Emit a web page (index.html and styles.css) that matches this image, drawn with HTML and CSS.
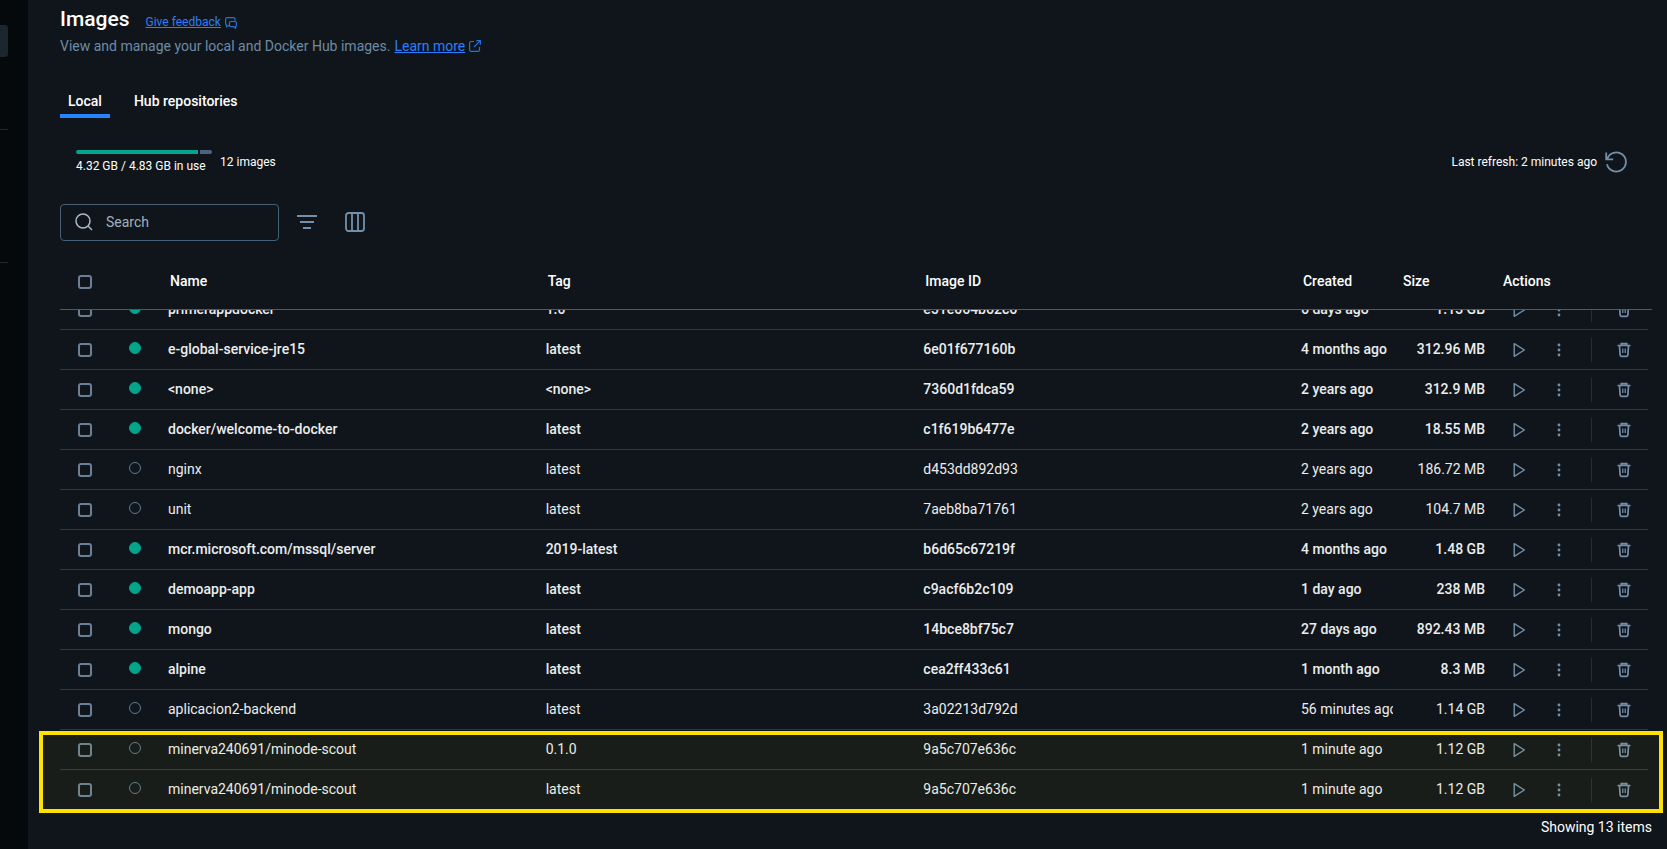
FILE: index.html
```html
<!DOCTYPE html>
<html lang="en">
<head>
<meta charset="utf-8">
<title>Images</title>
<link rel="stylesheet" href="styles.css">
</head>
<body>
<svg class="sprite" aria-hidden="true">
  <symbol id="i-play" viewBox="0 0 16 16"><path d="M3.2 1.7v12.6L13.4 8z" fill="none" stroke="currentColor" stroke-width="1.4" stroke-linejoin="round"/></symbol>
  <symbol id="i-more" viewBox="0 0 16 16"><g fill="currentColor"><circle cx="8" cy="3" r="1.4"/><circle cx="8" cy="8" r="1.4"/><circle cx="8" cy="13" r="1.4"/></g></symbol>
  <symbol id="i-trash" viewBox="0 0 16 16"><path d="M1.5 3.5h13M5.3 3V1.7h5.4V3M3.500 3.8l.6 9.200c.1 1 .5 1.300 1.300 1.300h5.200c.8 0 1.200-.3 1.300-1.300l.6-9.200" fill="none" stroke="currentColor" stroke-width="1.7"/><path d="M6.800 6.500v4.500M9.200 6.500v4.500" stroke="currentColor" stroke-width="1.200"/></symbol>
</svg>
<div class="app">
  <nav class="rail" aria-label="Sections">
    <span class="rail-active"></span>
    <span class="rail-line"></span>
    <span class="rail-line rail-line-low"></span>
  </nav>
  <main class="page">
    <header>
      <div class="title-row">
        <h1>Images</h1>
        <a class="feedback" href="#feedback">Give feedback</a>
        <svg class="link-icon" width="12" height="12" viewBox="0 0 12 12" fill="none" stroke="currentColor" stroke-width="1.200"><path d="M4.200 8.500H3.500L1.500 9.800V8C.9 7.700.6 7.200.6 6.600V2.200C.6 1.300 1.300.6 2.200.6h6.300c.9 0 1.600.7 1.600 1.600v1.600M5.800 4.500h4.200c.8 0 1.400.6 1.400 1.300v2.500c0 .6-.3 1-.8 1.200v1.900L8.800 9.700h-3c-.8 0-1.400-.6-1.400-1.400V5.800c0-.7.6-1.300 1.400-1.300z"/></svg>
      </div>
      <p class="subtitle">View and manage your local and Docker Hub images. <a href="#learn">Learn more</a>
        <svg class="link-icon" width="12" height="12" viewBox="0 0 12 12" fill="none" stroke="currentColor" stroke-width="1.200"><path d="M5 1.500H2.300C1.300 1.500.6 2.200.6 3v6.700c0 .9.700 1.600 1.600 1.600H9c.9 0 1.500-.7 1.500-1.600V7M7.300.6h4.100v4.100M11.400.6L5 7"/></svg>
      </p>
    </header>
    <div class="tabs" role="tablist">
      <button class="tab tab-on" role="tab" aria-selected="true">Local</button>
      <button class="tab" role="tab" aria-selected="false">Hub repositories</button>
    </div>
    <section class="status">
      <div class="usage">
        <div class="meter"><span class="meter-used"></span><span class="meter-free"></span></div>
        <span>4.32 GB / 4.83 GB in use</span>
      </div>
      <span class="count">12 images</span>
      <span class="refreshed">Last refresh: 2 minutes ago</span>
      <button class="icon-btn" aria-label="Refresh"><svg width="22" height="22" viewBox="0 0 22 22" fill="none" stroke="currentColor" stroke-width="1.800"><path d="M1.200 1.500v6.800h7M2.200 8A9.600 9.600 0 1 1 2 13.200"/></svg></button>
    </section>
    <div class="toolbar">
      <label class="search">
        <svg width="18" height="18" viewBox="0 0 18 18" fill="none" stroke="currentColor" stroke-width="1.500"><circle cx="8" cy="8" r="7"/><path d="M13 13l4 4"/></svg>
        <input type="text" placeholder="Search" aria-label="Search">
      </label>
      <button class="icon-btn" aria-label="Filter"><svg width="20" height="20" viewBox="0 0 20 20" fill="none" stroke="currentColor" stroke-width="2"><path d="M0 4h20M3 10h14M6 16h8"/></svg></button>
      <button class="icon-btn" aria-label="Columns"><svg width="20" height="20" viewBox="0 0 20 20" fill="none" stroke="currentColor" stroke-width="1.800"><rect x="1" y="1" width="18" height="18" rx="2.500"/><path d="M7 1v18M13 1v18"/></svg></button>
    </div>
    <div class="list">
      <table>
        <thead>
          <tr>
            <th><input type="checkbox" aria-label="Select all"></th>
            <th></th>
            <th>Name</th>
            <th>Tag</th>
            <th>Image ID</th>
            <th>Created</th>
            <th>Size</th>
            <th>Actions</th>
          </tr>
        </thead>
        <tbody id="rows"></tbody>
      </table>
      <div class="highlight"></div>
    </div>
    <footer>Showing 13 items</footer>
  </main>
</div>
<script src="app.js"></script>
</body>
</html>
```
FILE: styles.css
```css
* {
  box-sizing: border-box;
}

body {
  margin: 0;
  background: #10151b;
  color: #fff;
  font: 14px/20px Roboto, "Liberation Sans", sans-serif;
}

.sprite {
  display: none;
}

svg {
  display: block;
  flex: none;
}

button {
  border: 0;
  padding: 0;
  background: none;
  color: inherit;
  font: inherit;
}

.app {
  display: flex;
  height: 100vh;
}

.rail {
  display: flex;
  flex-direction: column;
  flex: none;
  width: 28px;
  padding-top: 25px;
  background: #05090b;
}

.rail-active {
  width: 8px;
  height: 32px;
  border-radius: 0 3px 3px 0;
  background: #1c262d;
}

.rail-line {
  width: 8px;
  height: 1px;
  margin-top: 72px;
  background: #23282b;
}

.rail-line-low {
  margin-top: 132px;
}

.page {
  display: flex;
  flex-direction: column;
  flex: 1;
  min-width: 0;
  padding: 4px 15px 0 32px;
}

.title-row {
  display: flex;
  align-items: center;
  height: 30px;
}

h1 {
  margin: 0 16px 0 0;
  font-size: 21px;
  font-weight: 500;
  line-height: 30px;
}

a {
  color: #2b7fff;
}

.feedback {
  margin: 6px 4px 0 0;
  font-size: 12px;
}

.link-icon {
  color: #2672d9;
}

.title-row .link-icon {
  margin-top: 8px;
}

.subtitle {
  display: flex;
  align-items: center;
  gap: 4px;
  margin: 2px 0 0;
  color: #6e8ba5;
}

.tabs {
  display: flex;
  gap: 16px;
  margin-top: 28px;
}

.tab {
  height: 34px;
  padding: 4px 8px 0;
  border-bottom: 4px solid transparent;
  font-weight: 500;
}

.tab-on {
  border-color: #2585ff;
}

.status {
  display: flex;
  align-items: center;
  gap: 8px;
  height: 40px;
  margin-top: 24px;
  padding: 0 25px 0 16px;
  font-size: 12px;
}

.usage {
  display: grid;
  gap: 2px;
  min-width: 136px;
  padding-top: 2px;
  line-height: 20px;
}

.meter {
  display: flex;
  gap: 2px;
  height: 4px;
  border-radius: 2px;
  overflow: hidden;
}

.meter-used {
  flex: 10;
  background: #00a58c;
}

.meter-free {
  flex: 1;
  background: #4d6480;
}

.refreshed {
  margin-left: auto;
}

.icon-btn {
  color: #7390ab;
}

.toolbar {
  display: flex;
  align-items: center;
  margin-top: 22px;
}

.toolbar .icon-btn {
  margin: 0 0 2px 28px;
}

.toolbar .search + .icon-btn {
  margin-left: 18px;
}

.search {
  display: flex;
  align-items: center;
  gap: 13px;
  width: 219px;
  height: 37px;
  padding: 0 14px 2px;
  border: 1px solid #446077;
  border-radius: 4px;
  color: #a9bac8;
}

.search input {
  flex: 1;
  min-width: 0;
  padding: 0;
  border: 0;
  outline: 0;
  background: none;
  color: inherit;
  font: inherit;
}

.search input::placeholder {
  color: #a3b1bd;
  opacity: 1;
}

.list {
  display: flex;
  flex: 1;
  min-height: 0;
  margin-top: 13px;
  position: relative;
}

table {
  display: flex;
  flex-direction: column;
  width: 100%;
}

thead {
  display: block;
  flex: none;
  padding-right: 4px;
  border-bottom: 1px solid #56585a;
}

/* Scrolled to its end: the topmost row slides under the header. */
tbody {
  display: flex;
  flex: 1;
  flex-direction: column;
  justify-content: flex-end;
  min-height: 0;
  padding-right: 4px;
  overflow: hidden;
}

tr {
  display: grid;
  grid-template-columns: 50px 50px 1fr 1fr 1fr 100px 100px 155px;
  flex: none;
}

thead tr {
  height: 55px;
}

tbody tr {
  height: 40px;
  border-bottom: 1px solid #273b47;
}

tbody tr:last-child {
  border-color: transparent;
}

th,
td {
  display: flex;
  align-items: center;
  min-width: 0;
  padding: 0;
  overflow: hidden;
  text-align: left;
  white-space: nowrap;
}

th {
  padding: 0 0 2px 10px;
  font-weight: 500;
}

td {
  padding: 0 0 2px 8px;
  color: #ebedee;
}

.used td {
  font-weight: 500;
}

th:first-child,
td:first-child,
td:nth-child(2) {
  justify-content: center;
  padding: 0;
}

td:first-child {
  padding-top: 1px;
}

td:nth-child(2) {
  padding-bottom: 3px;
}

td:nth-child(7) {
  justify-content: flex-end;
  padding: 0 8px 2px 0;
}

td:last-child {
  padding: 1px 16px 0 18px;
}

input[type="checkbox"] {
  appearance: none;
  width: 14px;
  height: 14px;
  margin: 0;
  border: 2px solid #6b8094;
  border-radius: 3px;
}

.dot {
  width: 12px;
  height: 12px;
  border: 1px solid #607b92;
  border-radius: 50%;
}

.used .dot {
  border-color: #00a58c;
  background: #00a58c;
}

td .icon-btn + .icon-btn {
  margin-left: 24px;
}

td .trash {
  margin-left: auto;
}

.rule {
  width: 1px;
  height: 24px;
  margin-left: 24px;
  background: #272c31;
}

.highlight {
  position: absolute;
  right: -11px;
  bottom: -3px;
  left: -21px;
  height: 82px;
  border: 4px solid #ffe100;
  background: rgba(255, 225, 0, 0.04);
  pointer-events: none;
}

footer {
  flex: none;
  height: 39px;
  padding-top: 7px;
  text-align: right;
}
```
FILE: app.js
```js
const images = [
  ["primerappdocker", "1.0", "e51e064b62c6", "6 days ago", "1.13 GB", true],
  ["e-global-service-jre15", "latest", "6e01f677160b", "4 months ago", "312.96 MB", true],
  ["<none>", "<none>", "7360d1fdca59", "2 years ago", "312.9 MB", true],
  ["docker/welcome-to-docker", "latest", "c1f619b6477e", "2 years ago", "18.55 MB", true],
  ["nginx", "latest", "d453dd892d93", "2 years ago", "186.72 MB", false],
  ["unit", "latest", "7aeb8ba71761", "2 years ago", "104.7 MB", false],
  ["mcr.microsoft.com/mssql/server", "2019-latest", "b6d65c67219f", "4 months ago", "1.48 GB", true],
  ["demoapp-app", "latest", "c9acf6b2c109", "1 day ago", "238 MB", true],
  ["mongo", "latest", "14bce8bf75c7", "27 days ago", "892.43 MB", true],
  ["alpine", "latest", "cea2ff433c61", "1 month ago", "8.3 MB", true],
  ["aplicacion2-backend", "latest", "3a02213d792d", "56 minutes ago", "1.14 GB", false],
  ["minerva240691/minode-scout", "0.1.0", "9a5c707e636c", "1 minute ago", "1.12 GB", false],
  ["minerva240691/minode-scout", "latest", "9a5c707e636c", "1 minute ago", "1.12 GB", false]
];

const icon = (name) => `<svg width="16" height="16"><use href="#i-${name}"/></svg>`;

const body = document.getElementById("rows");
for (const [name, tag, id, created, size, used] of images) {
  const row = body.insertRow();
  if (used) row.className = "used";
  row.insertCell().innerHTML = '<input type="checkbox">';
  row.querySelector("input").setAttribute("aria-label", `Select ${name}:${tag}`);
  row.insertCell().innerHTML = '<span class="dot"></span>';
  for (const text of [name, tag, id, created, size]) {
    row.insertCell().textContent = text;
  }
  row.insertCell().innerHTML =
    `<button class="icon-btn" aria-label="Run">${icon("play")}</button>` +
    `<button class="icon-btn" aria-label="More">${icon("more")}</button>` +
    '<span class="rule"></span>' +
    `<button class="icon-btn trash" aria-label="Delete">${icon("trash")}</button>`;
}
```
